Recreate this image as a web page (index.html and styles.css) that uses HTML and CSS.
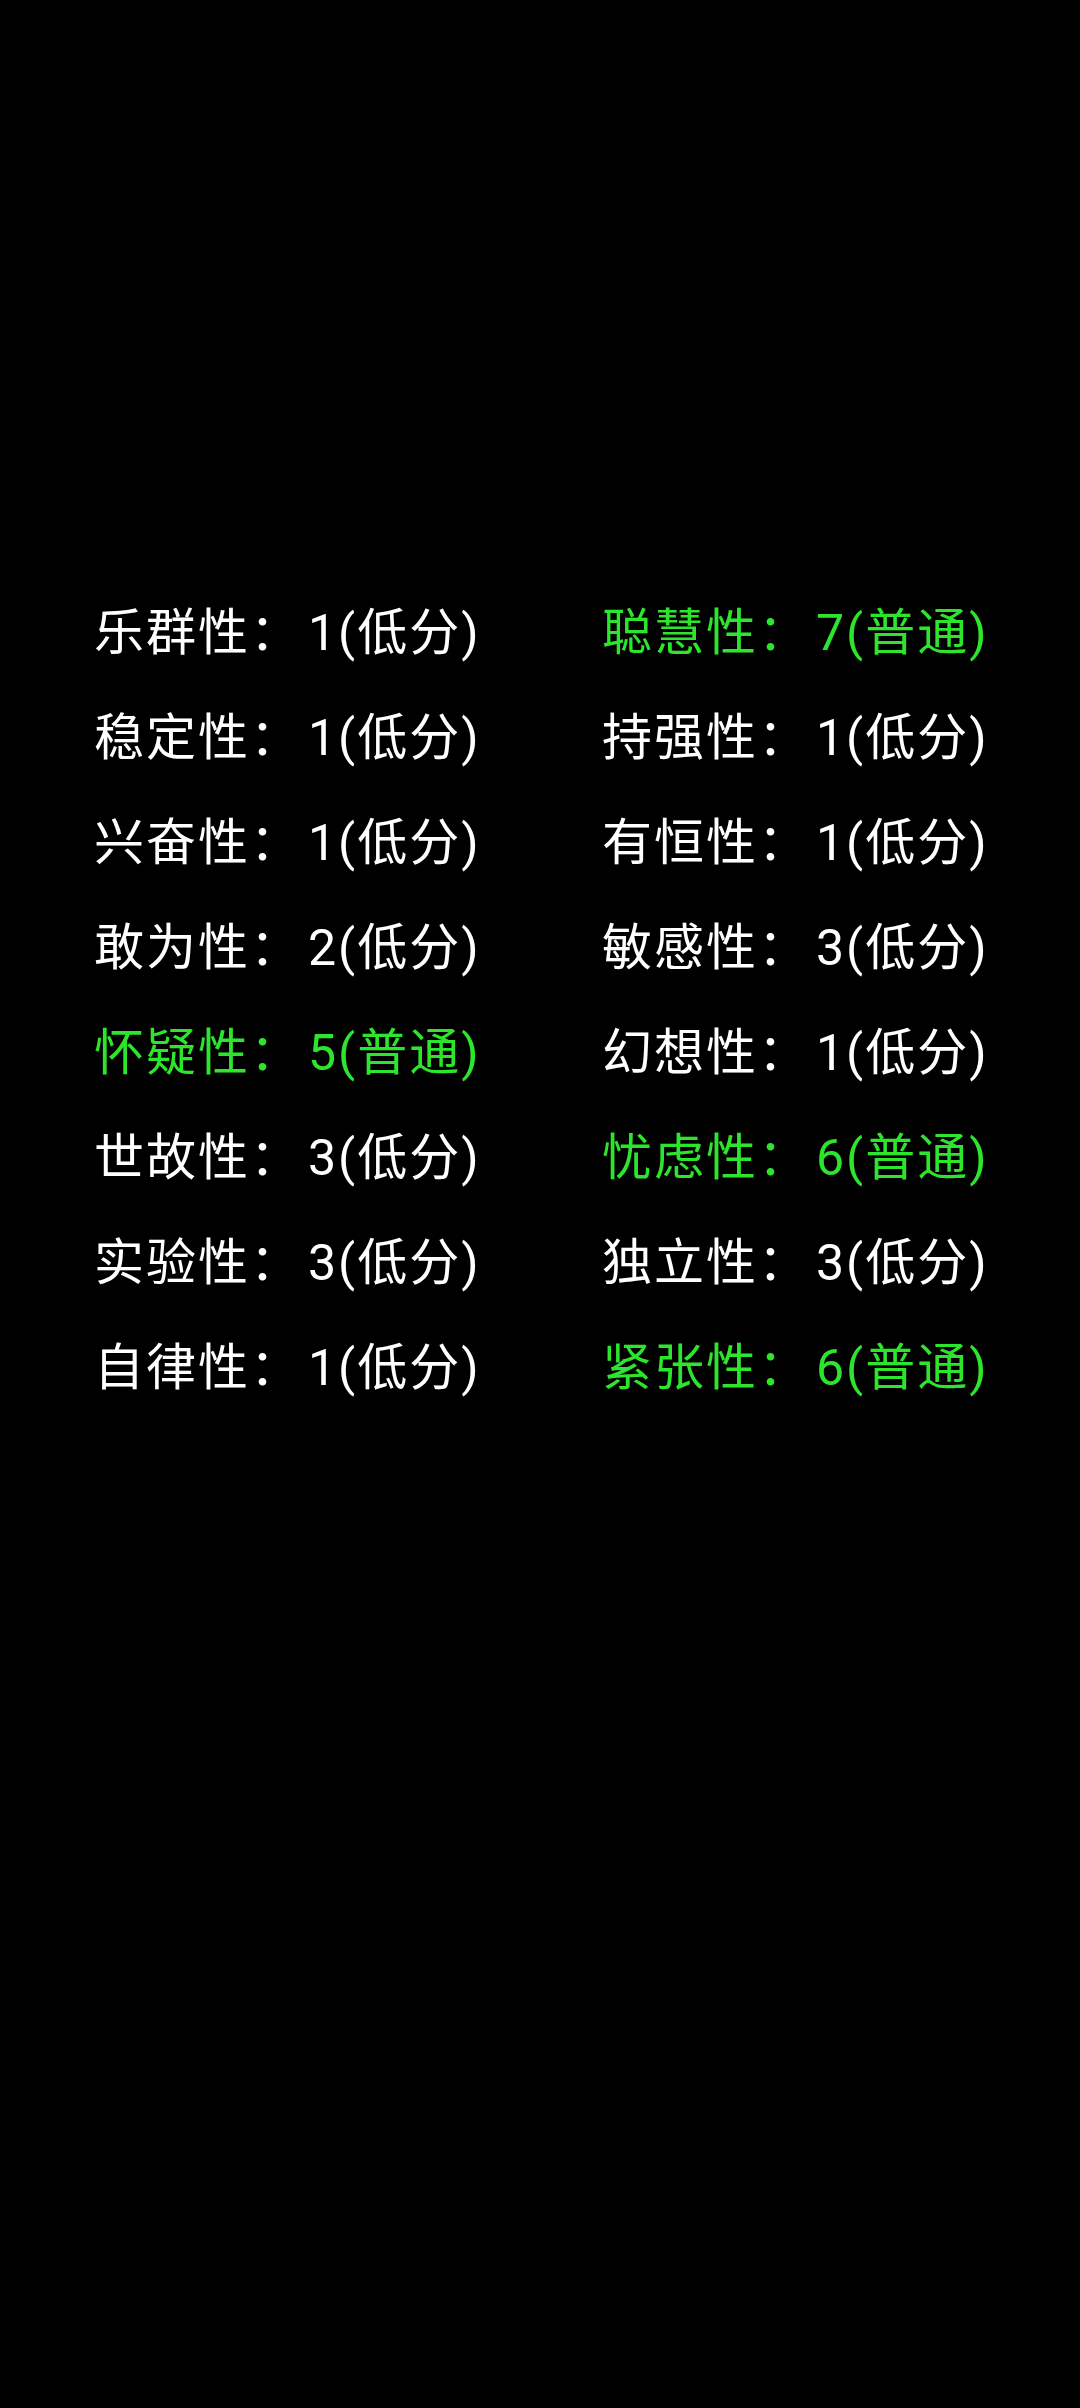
FILE: index.html
```html
<!DOCTYPE html>
<html lang="zh">
<head>
    <meta charset="UTF-8">
    <meta name="viewport" content="width=device-width, initial-scale=1.0">
    <title>16PF 结果</title>
    <link rel="stylesheet" href="styles.css">
</head>
<body>
    <div class="result-grid">
        <div class="factor"><span class="label">乐群性：</span><span class="score">1(低分)</span></div>
        <div class="factor normal"><span class="label">聪慧性：</span><span class="score">7(普通)</span></div>

        <div class="factor"><span class="label">稳定性：</span><span class="score">1(低分)</span></div>
        <div class="factor"><span class="label">持强性：</span><span class="score">1(低分)</span></div>

        <div class="factor"><span class="label">兴奋性：</span><span class="score">1(低分)</span></div>
        <div class="factor"><span class="label">有恒性：</span><span class="score">1(低分)</span></div>

        <div class="factor"><span class="label">敢为性：</span><span class="score">2(低分)</span></div>
        <div class="factor"><span class="label">敏感性：</span><span class="score">3(低分)</span></div>

        <div class="factor normal"><span class="label">怀疑性：</span><span class="score">5(普通)</span></div>
        <div class="factor"><span class="label">幻想性：</span><span class="score">1(低分)</span></div>

        <div class="factor"><span class="label">世故性：</span><span class="score">3(低分)</span></div>
        <div class="factor normal"><span class="label">忧虑性：</span><span class="score">6(普通)</span></div>

        <div class="factor"><span class="label">实验性：</span><span class="score">3(低分)</span></div>
        <div class="factor"><span class="label">独立性：</span><span class="score">3(低分)</span></div>

        <div class="factor"><span class="label">自律性：</span><span class="score">1(低分)</span></div>
        <div class="factor normal"><span class="label">紧张性：</span><span class="score">6(普通)</span></div>
    </div>
</body>
</html>
```

FILE: styles.css
```css
* {
    box-sizing: border-box;
    margin: 0;
    padding: 0;
}

body {
    background: #000;
    color: #fff;
    font-family: Roboto, "Noto Sans CJK SC", sans-serif;
    min-height: 100vh;
}

.result-grid {
    display: grid;
    grid-template-columns: 508px 1fr;
    padding: 581px 0 0 94px;
}

.factor {
    font-size: 50px;
    line-height: 105px;
    letter-spacing: 2px;
    white-space: nowrap;
}

.factor .score {
    margin-left: 6px;
}

.normal {
    color: #2ee52e;
}
```
